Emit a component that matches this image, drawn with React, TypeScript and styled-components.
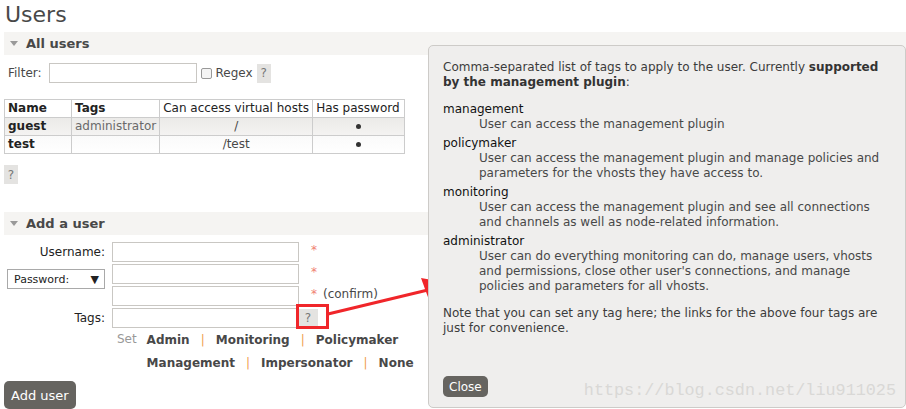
import styled, { createGlobalStyle } from 'styled-components';

const GlobalStyle = createGlobalStyle`
  html, body {
    margin: 0;
    padding: 0;
    background: #ffffff;
  }
  body {
    font-family: "DejaVu Sans", Verdana, sans-serif;
    font-size: 12px;
    color: #484848;
  }
`;

interface UserRow {
  name: string;
  tags: string;
  vhost: string;
  hasPassword: boolean;
}

const users: UserRow[] = [
  { name: 'guest', tags: 'administrator', vhost: '/', hasPassword: true },
  { name: 'test', tags: '', vhost: '/test', hasPassword: true },
];

const tagHelp = [
  { tag: 'management', text: 'User can access the management plugin' },
  {
    tag: 'policymaker',
    text: 'User can access the management plugin and manage policies and parameters for the vhosts they have access to.',
  },
  {
    tag: 'monitoring',
    text: 'User can access the management plugin and see all connections and channels as well as node-related information.',
  },
  {
    tag: 'administrator',
    text: "User can do everything monitoring can do, manage users, vhosts and permissions, close other user's connections, and manage policies and parameters for all vhosts.",
  },
];

export default function App() {
  return (
    <Page>
      <GlobalStyle />
      <Title>Users</Title>

      <SectionBar>
        <Triangle />
        All users
      </SectionBar>

      <FilterRow>
        <span>Filter:</span>
        <TextInput $width={148} />
        <CheckBox />
        <span>Regex</span>
        <HelpButton>?</HelpButton>
      </FilterRow>

      <UsersTable>
        <thead>
          <tr>
            <Th $bold $w={67}>Name</Th>
            <Th $bold $w={88}>Tags</Th>
            <Th $w={153}>Can access virtual hosts</Th>
            <Th $w={92}>Has password</Th>
          </tr>
        </thead>
        <tbody>
          {users.map((u, i) => (
            <Tr key={u.name} $alt={i % 2 === 1}>
              <NameCell>{u.name}</NameCell>
              <TagCell>{u.tags}</TagCell>
              <CenterCell>{u.vhost}</CenterCell>
              <CenterCell>{u.hasPassword ? <Dot /> : null}</CenterCell>
            </Tr>
          ))}
        </tbody>
      </UsersTable>

      <LoneHelp>
        <HelpButton>?</HelpButton>
      </LoneHelp>

      <SectionBar $top={28}>
        <Triangle />
        Add a user
      </SectionBar>

      <FormGrid>
        <Label>Username:</Label>
        <TextInput $width={187} />
        <Req>*</Req>

        <SelectBox>
          <span>Password:</span>
          <span>▼</span>
        </SelectBox>
        <TextInput $width={187} />
        <Req>*</Req>

        <TextInput $width={187} />
        <Req>
          *<Confirm>(confirm)</Confirm>
        </Req>

        <Label>Tags:</Label>
        <TextInput $width={187} />
        <TagHelp>
          <HelpButton $wide>?</HelpButton>
        </TagHelp>

        <span />
        <TagSetter>
          <SetLabel>Set</SetLabel>
          <TagLinks>
            <TagLink>Admin</TagLink>
            <Sep>|</Sep>
            <TagLink>Monitoring</TagLink>
            <Sep>|</Sep>
            <TagLink>Policymaker</TagLink>
            <TagLink>Management</TagLink>
            <Sep>|</Sep>
            <TagLink>Impersonator</TagLink>
            <Sep>|</Sep>
            <TagLink>None</TagLink>
          </TagLinks>
        </TagSetter>
      </FormGrid>

      <DarkButton $top={6}>Add user</DarkButton>

      <Annotation width="160" height="60" viewBox="0 0 160 60">
        <rect x="1.5" y="23.5" width="30" height="22" fill="none" stroke="#f0262a" strokeWidth="3" />
        <line x1="32" y1="32" x2="136" y2="7" stroke="#f0262a" strokeWidth="3" />
        <polygon points="153,1 125,-4 133,18" fill="#f0262a" />
      </Annotation>

      <Popup>
        <PopupText>
          Comma-separated list of tags to apply to the user. Currently <b>supported by the management plugin</b>:
        </PopupText>
        <TagList>
          {tagHelp.map((t) => (
            <div key={t.tag}>
              <TagName>{t.tag}</TagName>
              <TagDesc>{t.text}</TagDesc>
            </div>
          ))}
        </TagList>
        <PopupText>
          Note that you can set any tag here; the links for the above four tags are just for convenience.
        </PopupText>
        <PopupFooter>
          <DarkButton $small>Close</DarkButton>
        </PopupFooter>
        <Watermark>https://blog.csdn.net/liu911025</Watermark>
      </Popup>
    </Page>
  );
}

const Page = styled.div`
  position: relative;
  width: 906px;
  height: 409px;
  overflow: hidden;
  padding: 0 0 0 4px;
  box-sizing: border-box;
`;

const Title = styled.h1`
  margin: 0;
  padding: 3px 0 0 1px;
  height: 29px;
  box-sizing: border-box;
  font-size: 22px;
  font-weight: normal;
  line-height: 24px;
  color: #484848;
`;

const SectionBar = styled.div<{ $top?: number }>`
  margin-top: ${(p) => p.$top ?? 3}px;
  height: 23px;
  display: flex;
  align-items: center;
  gap: 8px;
  padding-left: 6px;
  background: #f5f4f2;
  font-size: 13px;
  font-weight: bold;
  color: #484848;
`;

const Triangle = styled.span`
  width: 0;
  height: 0;
  border-left: 4px solid transparent;
  border-right: 4px solid transparent;
  border-top: 5px solid #999;
`;

const FilterRow = styled.div`
  margin-top: 8px;
  display: flex;
  align-items: center;
  height: 20px;
  padding-left: 4px;
  gap: 4px;
  font-size: 12px;

  & > span:first-child {
    margin-right: 3px;
  }
`;

const TextInput = styled.div<{ $width: number }>`
  width: ${(p) => p.$width}px;
  height: 20px;
  box-sizing: border-box;
  border: 1px solid #c9c7c3;
  background: #fff;
`;

const CheckBox = styled.span`
  width: 9px;
  height: 9px;
  border: 1px solid #999;
  border-radius: 2px;
  background: #f4f4f4;
`;

const HelpButton = styled.span<{ $wide?: boolean }>`
  display: inline-flex;
  align-items: center;
  justify-content: center;
  width: ${(p) => (p.$wide ? 20 : 14)}px;
  height: 19px;
  background: #e4e3e1;
  color: #777;
  font-size: 12px;
`;

const UsersTable = styled.table`
  margin-top: 16px;
  border-collapse: collapse;
  font-size: 12px;
  line-height: 17px;
`;

const Th = styled.th<{ $bold?: boolean; $w: number }>`
  width: ${(p) => p.$w}px;
  border: 1px solid #ccc;
  padding: 0 3px;
  text-align: left;
  white-space: nowrap;
  font-weight: ${(p) => (p.$bold ? 'bold' : 'normal')};
  color: #222;
  box-sizing: border-box;
`;

const Tr = styled.tr<{ $alt: boolean }>`
  background: ${(p) =>
    p.$alt ? 'linear-gradient(#fafafa, #ffffff)' : 'linear-gradient(#ebeae8, #f4f3f2)'};
`;

const NameCell = styled.td`
  border: 1px solid #ccc;
  padding: 0 3px;
  font-weight: bold;
  color: #222;
`;

const TagCell = styled.td`
  border: 1px solid #ccc;
  padding: 0 3px;
  color: #6a6a6a;
`;

const CenterCell = styled.td`
  border: 1px solid #ccc;
  padding: 0 3px;
  text-align: center;
`;

const Dot = styled.span`
  display: inline-block;
  width: 5px;
  height: 5px;
  border-radius: 50%;
  background: #333;
  vertical-align: middle;
`;

const LoneHelp = styled.div`
  margin-top: 11px;
  height: 19px;
`;

const FormGrid = styled.div`
  margin-top: 7px;
  display: grid;
  grid-template-columns: 101px 187px 1fr;
  column-gap: 7px;
  row-gap: 2px;
  align-items: center;
  width: 410px;
`;

const Label = styled.span`
  text-align: right;
  color: #222;
  font-size: 12px;
`;

const Req = styled.span`
  color: #f08070;
  font-size: 12px;
  padding-left: 5px;
  align-self: start;
  padding-top: 1px;
`;

const Confirm = styled.span`
  color: #484848;
  margin-left: 6px;
`;

const SelectBox = styled.div`
  grid-row: span 2;
  margin-left: 3px;
  height: 20px;
  box-sizing: border-box;
  border: 1px solid #a9a9a9;
  display: flex;
  justify-content: space-between;
  align-items: center;
  padding: 0 5px 0 6px;
  color: #222;
  font-size: 11px;
  align-self: start;
  margin-top: 5px;
`;

const TagHelp = styled.span`
  margin-left: -8px;
`;

const TagSetter = styled.div`
  grid-column: span 2;
  display: flex;
  align-items: flex-start;
  padding-left: 5px;
  margin-top: -1px;
`;

const SetLabel = styled.span`
  color: #999;
  font-size: 12px;
  width: 31px;
  line-height: 14px;
  margin-top: 3px;
`;

const TagLinks = styled.div`
  display: flex;
  flex-wrap: wrap;
  width: 280px;
  line-height: 23px;
`;

const TagLink = styled.span`
  font-weight: bold;
  font-size: 12px;
  color: #484848;
`;

const Sep = styled.span`
  color: #f0a050;
  margin: 0 11px;
`;

const DarkButton = styled.button<{ $top?: number; $small?: boolean }>`
  margin-top: ${(p) => p.$top ?? 0}px;
  display: inline-block;
  border: none;
  border-radius: 5px;
  background: #666460;
  color: #fff;
  font-family: "DejaVu Sans", Verdana, sans-serif;
  font-size: ${(p) => (p.$small ? 12 : 13)}px;
  height: ${(p) => (p.$small ? 21 : 28)}px;
  padding: ${(p) => (p.$small ? '0 6px' : '0 7px')};
`;

const Annotation = styled.svg`
  position: absolute;
  left: 296px;
  top: 282px;
  overflow: visible;
`;

const Popup = styled.div`
  position: absolute;
  left: 428px;
  top: 45px;
  width: 478px;
  height: 363px;
  box-sizing: border-box;
  border: 1px solid #cdcbc8;
  border-radius: 5px;
  background: #efeeed;
  padding: 14px 14px 10px 14px;
  display: flex;
  flex-direction: column;
  font-size: 12px;
  line-height: 15px;
  color: #3c3c3c;
`;

const PopupText = styled.p`
  margin: 0 0 12px 0;
  b {
    color: #333;
  }
`;

const TagList = styled.div`
  display: flex;
  flex-direction: column;
  gap: 4px;
  margin-bottom: 12px;
`;

const TagName = styled.div`
  color: #111;
`;

const TagDesc = styled.div`
  margin-left: 36px;
  color: #484848;
`;

const PopupFooter = styled.div`
  margin-top: auto;
`;

const Watermark = styled.span`
  position: absolute;
  right: 9px;
  bottom: 9px;
  font-family: "Liberation Mono", "DejaVu Sans Mono", monospace;
  font-size: 16.8px;
  color: #d9d8d6;
`;
